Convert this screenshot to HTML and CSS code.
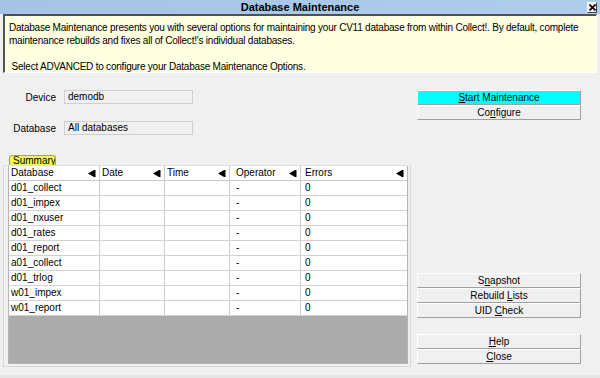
FILE: index.html
```html
<!DOCTYPE html>
<html lang="en">
<head>
  <meta charset="UTF-8" />
  <title>Database Maintenance</title>
  <link rel="stylesheet" href="styles.css">
</head>

<body>
  <div class="window">
    <!-- TITLE BAR -->
    <div class="titlebar">
      <span class="title">Database Maintenance</span>
      <span class="close-x">
        <svg width="7" height="7" viewBox="0 0 7 7"><path d="M0.5 0.5 L6.5 6.5 M6.5 0.5 L0.5 6.5" stroke="#000" stroke-width="1.6"/></svg>
      </span>
    </div>

    <!-- INFO BOX -->
    <div class="info">
      Database Maintenance presents you with several options for maintaining your CV11 database from within Collect!. By default, complete<br>
      maintenance rebuilds and fixes all of Collect!'s individual databases.<br>
      <br>
      &nbsp;Select ADVANCED to configure your Database Maintenance Options.
    </div>

    <div class="main">
      <!-- LEFT: fields + summary list -->
      <div class="left">
        <div class="field-row">
          <span class="label">Device</span>
          <span class="field">demodb</span>
        </div>
        <div class="field-row second">
          <span class="label">Database</span>
          <span class="field">All databases</span>
        </div>

        <div class="tab">Summary</div>
        <div class="panel">
          <div class="list">
            <div class="row head">
              <div class="cell">Database<svg class="sort" width="8" height="7" viewBox="0 0 8 7"><path d="M0 3.5 L6 0 L6 7 Z" fill="#000"/><rect x="6" y="0" width="1.5" height="7" fill="#000"/></svg></div>
              <div class="cell">Date<svg class="sort" width="8" height="7" viewBox="0 0 8 7"><path d="M0 3.5 L6 0 L6 7 Z" fill="#000"/><rect x="6" y="0" width="1.5" height="7" fill="#000"/></svg></div>
              <div class="cell">Time<svg class="sort" width="8" height="7" viewBox="0 0 8 7"><path d="M0 3.5 L6 0 L6 7 Z" fill="#000"/><rect x="6" y="0" width="1.5" height="7" fill="#000"/></svg></div>
              <div class="cell">Operator<svg class="sort" width="8" height="7" viewBox="0 0 8 7"><path d="M0 3.5 L6 0 L6 7 Z" fill="#000"/><rect x="6" y="0" width="1.5" height="7" fill="#000"/></svg></div>
              <div class="cell">Errors<svg class="sort" width="8" height="7" viewBox="0 0 8 7"><path d="M0 3.5 L6 0 L6 7 Z" fill="#000"/><rect x="6" y="0" width="1.5" height="7" fill="#000"/></svg></div>
            </div>
            <div class="row"><div class="cell">d01_collect</div><div class="cell"></div><div class="cell"></div><div class="cell">-</div><div class="cell">0</div></div>
            <div class="row"><div class="cell">d01_impex</div><div class="cell"></div><div class="cell"></div><div class="cell">-</div><div class="cell">0</div></div>
            <div class="row"><div class="cell">d01_nxuser</div><div class="cell"></div><div class="cell"></div><div class="cell">-</div><div class="cell">0</div></div>
            <div class="row"><div class="cell">d01_rates</div><div class="cell"></div><div class="cell"></div><div class="cell">-</div><div class="cell">0</div></div>
            <div class="row"><div class="cell">d01_report</div><div class="cell"></div><div class="cell"></div><div class="cell">-</div><div class="cell">0</div></div>
            <div class="row"><div class="cell">a01_collect</div><div class="cell"></div><div class="cell"></div><div class="cell">-</div><div class="cell">0</div></div>
            <div class="row"><div class="cell">d01_trlog</div><div class="cell"></div><div class="cell"></div><div class="cell">-</div><div class="cell">0</div></div>
            <div class="row"><div class="cell">w01_impex</div><div class="cell"></div><div class="cell"></div><div class="cell">-</div><div class="cell">0</div></div>
            <div class="row"><div class="cell">w01_report</div><div class="cell"></div><div class="cell"></div><div class="cell">-</div><div class="cell">0</div></div>
            <div class="empty"></div>
          </div>
        </div>
      </div>

      <!-- RIGHT: buttons -->
      <div class="right">
        <div class="btn primary"><u>S</u>tart Maintenance</div>
        <div class="btn">Co<u>n</u>figure</div>

        <div class="btn group">S<u>n</u>apshot</div>
        <div class="btn">Rebuild <u>L</u>ists</div>
        <div class="btn">UID <u>C</u>heck</div>

        <div class="btn group2"><u>H</u>elp</div>
        <div class="btn"><u>C</u>lose</div>
      </div>
    </div>
  </div>
</body>
</html>
```

FILE: styles.css
```css
* {
  margin: 0;
  padding: 0;
  box-sizing: border-box;
}

html,
body {
  width: 600px;
  height: 378px;
  overflow: hidden;
  background: #f0f0f0;
  font-family: 'Liberation Sans', Arial, sans-serif;
  font-size: 10px;
  color: #000;
}

.window {
  height: 378px;
  border-bottom: 3px solid #e6e6e6;
  position: relative;
}

/* title bar */
.titlebar {
  height: 14px;
  background: linear-gradient(to right, #a4c3e6, #b0cdec);
  display: flex;
  align-items: center;
  justify-content: center;
  position: relative;
}

.title {
  font-weight: bold;
  font-size: 11px;
}

.close-x {
  position: absolute;
  right: 3px;
  top: 2px;
  width: 10px;
  height: 11px;
  background: #f0f0f0;
  border: 1px solid;
  border-color: #fff #404040 #404040 #fff;
  display: flex;
  align-items: center;
  justify-content: center;
}

/* info box */
.info {
  margin: 0 3px;
  height: 59px;
  background: #ffffe1;
  border: 1px solid;
  border-color: #505050 #fff #fff #505050;
  border-width: 2px 1px 1px 2px;
  padding: 5px 0 0 4px;
  line-height: 13px;
  letter-spacing: -0.22px;
  white-space: nowrap;
}

/* main area */
.main {
  display: flex;
  gap: 5px;
}

.left {
  width: 412px;
  padding-top: 17px;
}

.field-row {
  display: flex;
  align-items: center;
  gap: 8px;
}

.field-row.second {
  margin-top: 17px;
}

.label {
  width: 56px;
  text-align: right;
}

.field {
  width: 129px;
  height: 14px;
  line-height: 12px;
  padding-left: 3px;
  background: #f0f0f0;
  border: 1px solid #cfcfcf;
}

.tab {
  margin: 20px 0 0 9px;
  width: 47px;
  height: 10px;
  line-height: 9px;
  background: #f4f45c;
  border: 1px solid #a8a838;
  border-bottom: none;
  border-radius: 3px 3px 0 0;
  padding-left: 3px;
  overflow: hidden;
}

.panel {
  margin-left: 3px;
  width: 408px;
  height: 202px;
  border: 1px solid #d8d8d8;
  border-top-color: #e0e0e0;
  padding: 0 2px 3px 4px;
}

.list {
  height: 198px;
  border: 1px solid #b4b4b4;
  border-top: none;
  display: flex;
  flex-direction: column;
  background: #fff;
}

.row {
  display: grid;
  grid-template-columns: 91px 65px 65px 71px 1fr;
  height: 15px;
  border-bottom: 1px solid #d2d2d2;
  background: #fff;
}

.row.head {
  border-bottom-color: #c8c8c8;
}

.cell {
  line-height: 14px;
  padding-left: 2px;
  border-right: 1px solid #cccccc;
  white-space: nowrap;
  display: flex;
  align-items: center;
}

.cell:last-child {
  border-right: none;
}

.row .cell:nth-child(4) {
  padding-left: 6px;
}

.row .cell:nth-child(5) {
  padding-left: 4px;
}

.head .cell {
  padding-left: 2px;
  justify-content: space-between;
  padding-right: 3px;
}

.sort {
  flex: none;
}

.empty {
  flex: 1;
  background: #ababab;
}

/* right buttons */
.right {
  width: 164px;
  padding-top: 17px;
  display: flex;
  flex-direction: column;
}

.btn {
  height: 15px;
  line-height: 13px;
  text-align: center;
  background: #f0f0f0;
  border: 1px solid;
  border-color: #fff #a0a0a0 #a0a0a0 #fff;
}

.btn.primary {
  background: #00ffff;
}

.btn.group {
  margin-top: 153px;
}

.btn.group2 {
  margin-top: 16px;
}
```
